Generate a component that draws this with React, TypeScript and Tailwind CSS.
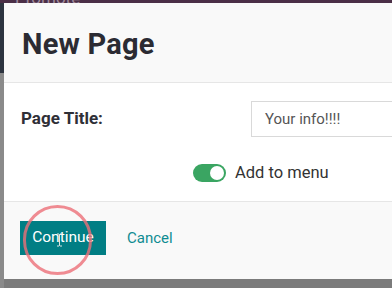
import React from 'react';

const App: React.FC = () => {
  return (
    <div className="relative w-[392px] h-[288px] overflow-hidden bg-[#7b7b7b] font-['Roboto','Liberation_Sans',sans-serif]">
      <div className="h-[3px] bg-[#4b2f47] overflow-hidden">
        <span className="block pl-[15px] -mt-[14px] text-[17px] text-[#a08a9c]">Promote</span>
      </div>

      <div className="flex">
        <div className="w-[4px] h-[285px] flex flex-col shrink-0">
          <div className="h-[70px] bg-[#2d3440]"></div>
          <div className="flex-1 bg-[#8a8a8a]"></div>
        </div>

        <div className="flex-1 flex flex-col min-w-0">
          <header className="h-[80px] bg-[#f9f9f9] border-b border-[#e6e6e6] flex items-center pl-[18px] pt-[4px]">
            <h1 className="text-[29px] font-bold text-[#2b2b33] tracking-[0.2px]">New Page</h1>
          </header>

          <main className="h-[118px] bg-white flex flex-col overflow-hidden">
            <div className="flex items-center h-[36px] mt-[18px]">
              <label className="w-[247px] shrink-0 pl-[17px] text-[17px] font-bold text-[#2f2f37]">Page Title:</label>
              <div className="w-[200px] shrink-0 h-[36px] border border-[#d9d9d9] flex items-center pl-[13px]">
                <span className="text-[15px] text-[#555555]">Your info!!!!</span>
              </div>
            </div>
            <div className="flex items-center mt-[24px] pl-[189px]">
              <div className="relative w-[33px] h-[18px] rounded-full bg-[#3aa562]">
                <div className="absolute right-[2px] top-[2px] w-[14px] h-[14px] rounded-full bg-white"></div>
              </div>
              <span className="ml-[9px] text-[16.5px] text-[#333333]">Add to menu</span>
            </div>
          </main>

          <footer className="h-[78px] bg-[#f9f9f9] border-t border-[#e6e6e6] flex items-center pl-[16px] pb-[5px]">
            <button className="w-[86px] h-[34px] bg-[#017e84] text-white text-[15.5px]">Continue</button>
            <button className="ml-[21px] text-[15px] text-[#0f8c92]">Cancel</button>
          </footer>
        </div>
      </div>

      <div className="absolute left-[23px] top-[205px] w-[69px] h-[70px] rounded-full border-[3px] border-[#ec6f78]/80"></div>
      <svg className="absolute left-[56px] top-[233px]" width="7" height="14" viewBox="0 0 7 14">
        <path d="M1 1h2l0.5 0.5L4 1h2M3.5 1.5v11M1 13h2l0.5-0.5L4 13h2" fill="none" stroke="#dfe6e6" strokeWidth="1" />
      </svg>
    </div>
  );
};

export default App;
